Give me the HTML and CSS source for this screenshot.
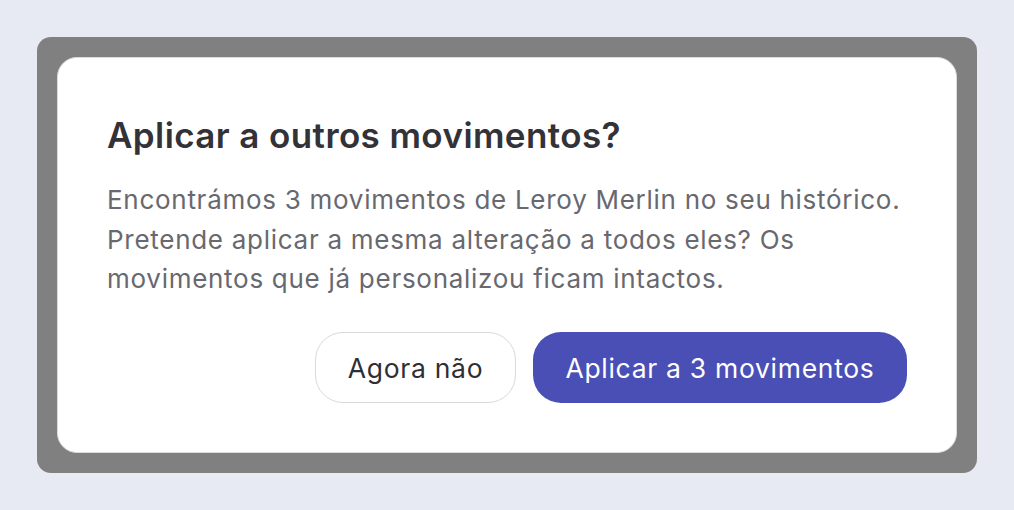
FILE: index.html
```html
<!DOCTYPE html>
<html lang="pt">
<head>
<meta charset="utf-8">
<link rel="stylesheet" href="styles.css">
</head>
<body>
<div class="overlay">
  <div class="dialog">
    <h2 class="title">Aplicar a outros movimentos?</h2>
    <p class="body">Encontrámos 3 movimentos de Leroy Merlin no seu histórico. Pretende aplicar a mesma alteração a todos eles? Os movimentos que já personalizou ficam intactos.</p>
    <div class="actions">
      <button class="btn btn-secondary">Agora não</button>
      <button class="btn btn-primary">Aplicar a 3 movimentos</button>
    </div>
  </div>
</div>
</body>
</html>
```
FILE: styles.css
```css
html, body {
  margin: 0;
  padding: 0;
}
body {
  background: #e8eaf3;
  width: 1014px;
  height: 510px;
  font-family: "Inter", "Liberation Sans", sans-serif;
  padding-top: 37px;
  box-sizing: border-box;
}
.overlay {
  margin-left: 37px;
  width: 940px;
  height: 436px;
  box-sizing: border-box;
  padding: 20px;
  background: #808080;
  border-radius: 14px;
}
.dialog {
  background: #ffffff;
  border: 1px solid #dcdcdc;
  border-radius: 20px;
  height: 396px;
  box-sizing: border-box;
  padding: 57px 49px 49px 49px;
  display: flex;
  flex-direction: column;
}
.title {
  margin: 0;
  font-size: 35px;
  font-weight: 600;
  line-height: 40px;
  letter-spacing: 0.4px;
  color: #323238;
}
.body {
  margin: 25px 0 0 0;
  font-size: 26px;
  line-height: 39.5px;
  letter-spacing: 0.72px;
  color: #68686f;
  max-width: 802px;
}
.actions {
  margin-top: auto;
  display: flex;
  justify-content: flex-end;
  gap: 17px;
}
.btn {
  height: 71px;
  padding: 0 20px;
  border-radius: 28px;
  font-family: inherit;
  font-size: 26.5px;
  letter-spacing: 0.7px;
  box-sizing: border-box;
}
.btn-secondary {
  background: #ffffff;
  border: 1.5px solid #d9d9d9;
  color: #2f2f33;
  width: 201px;
}
.btn-primary {
  background: #4a4fb6;
  border: none;
  color: #ffffff;
  width: 374px;
}
```
